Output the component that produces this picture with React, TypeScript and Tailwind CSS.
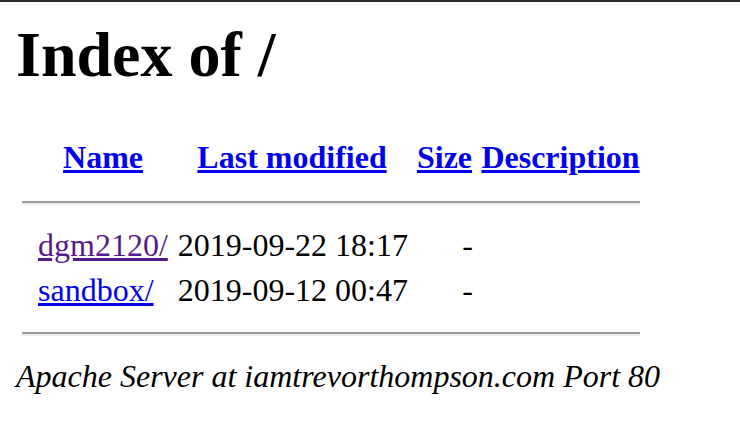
const columns = [
  { label: "Name", href: "?C=N;O=D" },
  { label: "Last modified", href: "?C=M;O=A" },
  { label: "Size", href: "?C=S;O=A" },
  { label: "Description", href: "?C=D;O=A" },
];

const entries = [
  { name: "dgm2120/", modified: "2019-09-22 18:17", size: "-", visited: true },
  { name: "sandbox/", modified: "2019-09-12 00:47", size: "-", visited: false },
];

const grid = "grid grid-cols-[8px_130px_232px_57px_159px] gap-x-[8px]";

function Rule() {
  return (
    <div className="h-[4px] w-[618px] flex flex-col">
      <div className="h-[2px] bg-[#9b9b9b]" />
      <div className="h-[2px] bg-[#ececec]" />
    </div>
  );
}

export default function App() {
  return (
    <div className="min-h-[428px] w-[740px] bg-white text-black font-['Liberation_Serif','Times_New_Roman',serif]">
      <div className="h-[2px] bg-[#2b2b2b]" />

      <h1 className="mt-[21px] ml-[16px] text-[64px] leading-[64px] font-bold">Index of /</h1>

      <div className="ml-[22px] mt-[52px]">
        {/* column headers */}
        <div className={`${grid} text-[32px] leading-[36px] font-bold`}>
          <span />
          {columns.map((c) => (
            <a key={c.label} href={c.href} className="text-center text-[#0000ee] underline whitespace-nowrap">
              {c.label}
            </a>
          ))}
        </div>

        <div className="mt-[26px]">
          <Rule />
        </div>

        <div className="mt-[22px] flex flex-col gap-y-[9px] text-[32px] leading-[36px]">
          {entries.map((e) => (
            <div key={e.name} className={grid}>
              <span />
              <a
                href={e.name}
                className={`underline whitespace-nowrap justify-self-start ${e.visited ? "text-[#551a8b]" : "text-[#0000ee]"}`}
              >
                {e.name}
              </a>
              <span className="text-right whitespace-nowrap">{e.modified}</span>
              <span className="text-right">{e.size}</span>
              <span>&nbsp;</span>
            </div>
          ))}
        </div>

        <div className="mt-[24px]">
          <Rule />
        </div>
      </div>

      <address className="mt-[22px] ml-[16px] text-[32px] leading-[36px] italic">
        Apache Server at iamtrevorthompson.com Port 80
      </address>
    </div>
  );
}
